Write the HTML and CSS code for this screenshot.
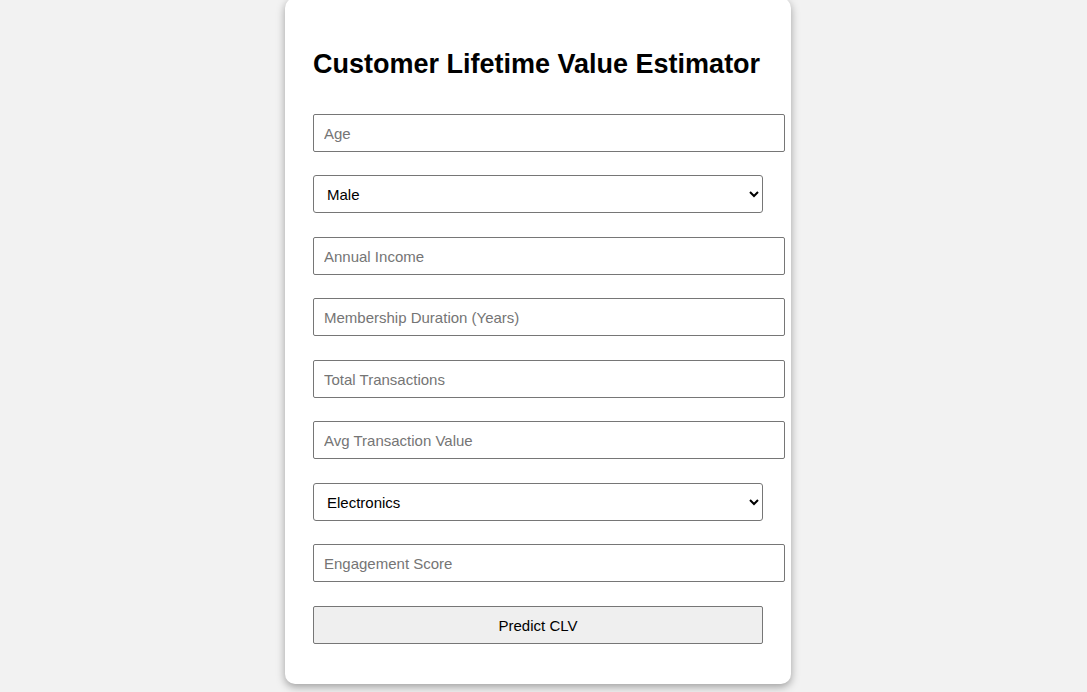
FILE: index.html
```html
<!DOCTYPE html>
<html lang="en">
<head>
<meta charset="utf-8">
<title>Customer Lifetime Value Estimator</title>
<link rel="stylesheet" href="styles.css">
</head>
<body>
<div class="card">
  <h2 class="title">Customer Lifetime Value Estimator</h2>
  <form class="form">
    <input class="field" type="number" placeholder="Age">
    <select class="choice">
      <option>Male</option>
      <option>Female</option>
    </select>
    <input class="field" type="number" placeholder="Annual Income">
    <input class="field" type="number" placeholder="Membership Duration (Years)">
    <input class="field" type="number" placeholder="Total Transactions">
    <input class="field" type="number" placeholder="Avg Transaction Value">
    <select class="choice">
      <option>Electronics</option>
      <option>Clothing</option>
      <option>Groceries</option>
    </select>
    <input class="field" type="number" placeholder="Engagement Score">
    <button class="submit" type="button">Predict CLV</button>
  </form>
</div>
</body>
</html>
```

FILE: styles.css
```css
html, body {
  margin: 0;
  padding: 0;
}
body {
  background: #f2f2f2;
  font-family: "Liberation Sans", Arial, sans-serif;
  font-size: 15px;
  color: #000;
  height: 692px;
  overflow: hidden;
}
.card {
  box-sizing: border-box;
  width: 506px;
  margin: -2px 0 0 285px;
  padding: 28px 28px 40px;
  background: #fff;
  border-radius: 10px;
  box-shadow: 0 3px 8px rgba(0, 0, 0, 0.35);
}
.title {
  margin: 23px 0 0;
  font-size: 27px;
  line-height: 31px;
  font-weight: bold;
  height: 31px;
}
.form {
  display: flex;
  flex-direction: column;
  align-items: flex-start;
  gap: 23.5px;
  margin-top: 33.5px;
}
.field {
  box-sizing: content-box;
  width: 450px;
  height: 16px;
  padding: 11px 10px 9px;
  margin: 0;
  font-family: inherit;
  font-size: 15px;
  line-height: 16px;
  border: 1px solid #767676;
  border-radius: 2px;
  background: #fff;
  color: #000;
  outline: none;
}
.field::placeholder {
  color: #757575;
}
.field::-webkit-outer-spin-button,
.field::-webkit-inner-spin-button {
  -webkit-appearance: none;
  margin: 0;
}
.choice {
  box-sizing: border-box;
  width: 450px;
  height: 38px;
  padding: 1px 9px 0;
  margin: 0;
  font-family: inherit;
  font-size: 15px;
  border: 1px solid #767676;
  border-radius: 3px;
  background: #fff;
  color: #000;
}
.submit {
  box-sizing: border-box;
  width: 450px;
  height: 38px;
  padding: 10px;
  margin: 0;
  font-family: inherit;
  font-size: 15px;
  border: 1px solid #767676;
  border-radius: 2px;
  background: #efefef;
  color: #000;
}
```
